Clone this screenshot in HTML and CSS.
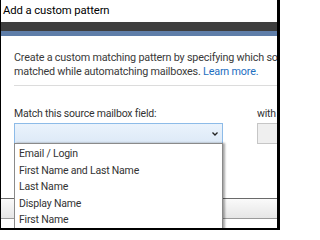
FILE: index.html
```html
<!DOCTYPE html>
<html>
<head>
<meta charset="utf-8">
<link rel="stylesheet" href="styles.css">
</head>
<body>
<div class="frame">
  <div class="title">Add a custom pattern</div>
  <div class="darkbar"></div>
  <div class="bluebar"></div>
  <div class="content">
    <p class="intro">Create a custom matching pattern by specifying which source mailbox field should be<br>matched while automatching mailboxes. <a class="link" href="#">Learn more.</a></p>
    <div class="rule"></div>
    <div class="fields">
      <div class="field first">
        <div class="label">Match this source mailbox field:</div>
        <div class="select">
          <svg class="chev" width="6" height="4" viewBox="0 0 6 4"><path d="M0.5 0.5 L3 3 L5.5 0.5" fill="none" stroke="#222" stroke-width="1.3"/></svg>
        </div>
      </div>
      <div class="field second">
        <div class="label">with target field</div>
        <div class="box"></div>
      </div>
    </div>
  </div>
  <div class="footer"></div>
  <ul class="list">
    <li>Email / Login</li>
    <li>First Name and Last Name</li>
    <li>Last Name</li>
    <li>Display Name</li>
    <li>First Name</li>
  </ul>
</div>
</body>
</html>
```
FILE: styles.css
```css
html, body {
  margin: 0;
  padding: 0;
  background: #fff;
  width: 280px;
  height: 230px;
  overflow: hidden;
}
.frame {
  position: relative;
  width: 280px;
  height: 230px;
  box-sizing: border-box;
  border-left: 1px solid #000;
  border-right: 3px solid #000;
  border-bottom: 2px solid #000;
  overflow: hidden;
  font-family: Roboto, "Noto Sans", sans-serif;
  color: #333;
}
.title {
  height: 22px;
  line-height: 21px;
  padding-left: 2px;
  font-size: 11.3px;
  letter-spacing: -0.1px;
  color: #000;
  white-space: nowrap;
}
.darkbar {
  height: 9px;
  background: #3e3e3e;
}
.bluebar {
  height: 5px;
  background: #5f7ea9;
}
.content {
  padding-left: 13px;
  overflow: hidden;
}
.intro {
  margin: 15px 0 0 0;
  font-size: 10.8px;
  letter-spacing: -0.2px;
  line-height: 14px;
  color: #3a3a3a;
  white-space: nowrap;
  overflow: hidden;
}
.link {
  color: #1e6fbf;
  text-decoration: none;
}
.rule {
  margin-top: 6px;
  height: 1px;
  background: #dcdcdc;
}
.fields {
  display: flex;
  gap: 34px;
  margin-top: 21px;
  overflow: hidden;
}
.field {
  display: flex;
  flex-direction: column;
  gap: 3px;
  flex: none;
}
.field.second {
  flex: 1;
  min-width: 0;
  overflow: hidden;
}
.label {
  font-size: 10.5px;
  letter-spacing: -0.2px;
  line-height: 13px;
  color: #333;
  white-space: nowrap;
}
.select {
  width: 209px;
  height: 21px;
  box-sizing: border-box;
  border: 1px solid #8dbbe8;
  background: linear-gradient(#eaf3fc, #dde9f7);
  display: flex;
  align-items: center;
  justify-content: flex-end;
  padding-right: 4px;
}
.box {
  width: 60px;
  height: 21px;
  box-sizing: border-box;
  border: 1px solid #c6c6c6;
  background: #efefef;
}
.footer {
  position: absolute;
  left: 0;
  right: 0;
  top: 198px;
  height: 21px;
  box-sizing: border-box;
  border-top: 1px solid #6a6a6a;
  border-bottom: 1px solid #9a9a9a;
  background: linear-gradient(#fafafa, #e6e6e6);
}
.list {
  position: absolute;
  left: 13px;
  top: 143px;
  width: 209px;
  height: 100px;
  margin: 0;
  padding: 2px 0 0 0;
  list-style: none;
  box-sizing: border-box;
  border: 1px solid #8a8a8a;
  background: #fff;
  box-shadow: 2px 0 2px rgba(0,0,0,0.35);
}
.list li {
  font-size: 10.5px;
  letter-spacing: -0.2px;
  line-height: 16.5px;
  padding-left: 4px;
  color: #333;
  white-space: nowrap;
}
```
